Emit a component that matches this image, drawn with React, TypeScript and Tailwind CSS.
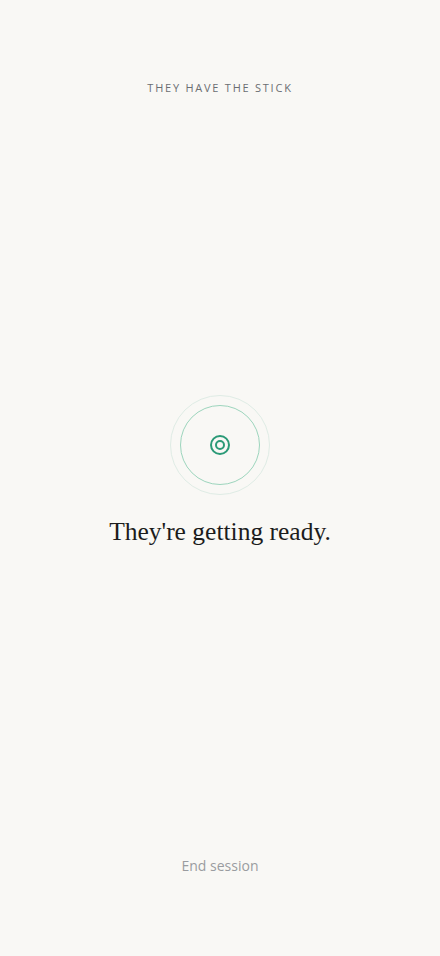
import React from 'react';

export default function App() {
  return (
    <div className="flex h-[956px] w-full flex-col items-center bg-[#f9f8f5]" style={{ fontFamily: '"Open Sans", "Noto Sans", sans-serif' }}>
      <div className="pt-[81px] text-[11px] leading-[14px] font-medium tracking-[0.16em] text-[#6b6e72]">
        THEY HAVE THE STICK
      </div>

      <div className="flex flex-1 flex-col items-center justify-center pb-[8px]">
        <div className="flex h-[100px] w-[100px] items-center justify-center rounded-full border border-[#dfece5]">
          <div className="flex h-[80px] w-[80px] items-center justify-center rounded-full border-[1.5px] border-[#9dd5bd]">
            <div className="flex h-[20px] w-[20px] items-center justify-center rounded-full border-2 border-[#2b9a77]">
              <div className="h-[10px] w-[10px] rounded-full border-2 border-[#2b9a77]" />
            </div>
          </div>
        </div>
        <h1 className="mt-[21px] text-[25.5px] leading-[32px] text-[#1c1c1c]" style={{ fontFamily: '"Liberation Serif", "DejaVu Serif", serif' }}>
          They're getting ready.
        </h1>
      </div>

      <button className="mb-[80px] text-[14px] leading-[20px] font-medium text-[#9a9ca0]">End session</button>
    </div>
  );
}
